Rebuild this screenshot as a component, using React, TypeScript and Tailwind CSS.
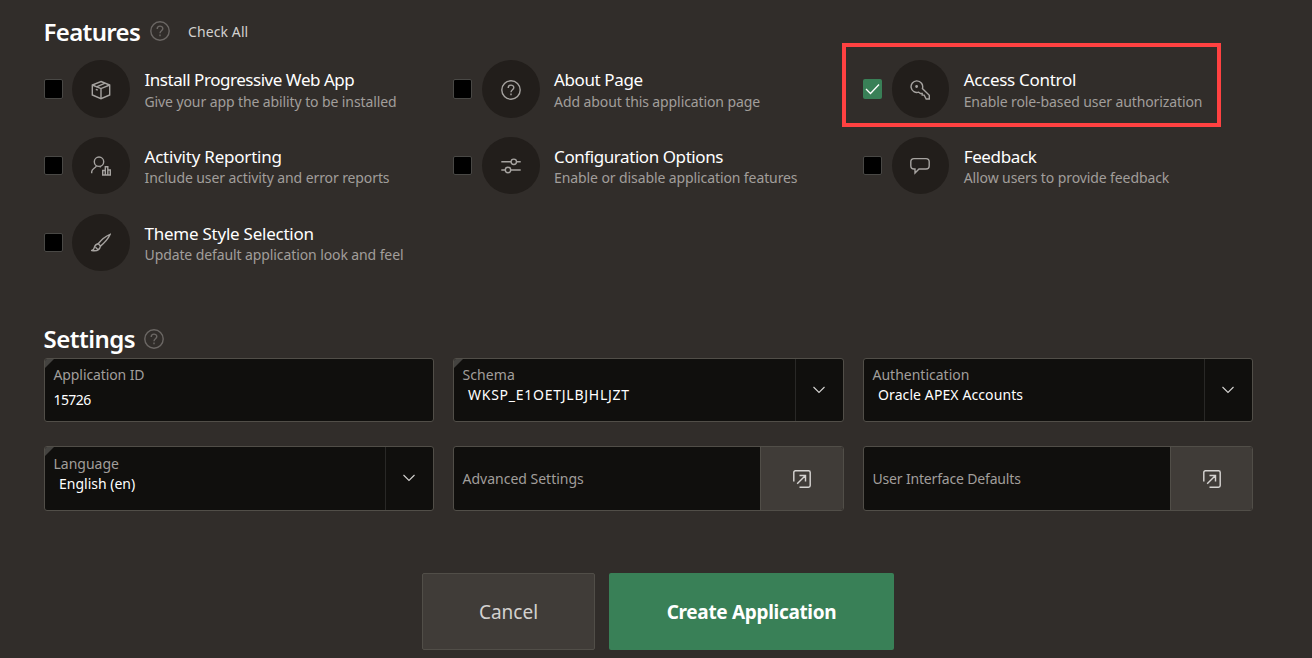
import type { ReactNode } from 'react';

const icons: Record<string, ReactNode> = {
  box: <><path d="M10 1.500 18.700 5v10L10 18.700 1.300 15V5z" /><path d="M1.300 5 10 8.600 18.700 5M10 8.600v10M4.800 9.300l2 .9" /><path d="m5.500 6.800 8.700-3.600" /></>,
  help: <><circle cx="10" cy="10" r="9.200" /><path d="M7.200 8c0-3.900 5.600-3.600 5.600-.4 0 2.300-2.800 2-2.800 4.700M10 13.600v1.600" /></>,
  key: <><path d="M6.700.9a5.800 5.800 0 1 0 2 11.300l1.800 1.300h1.700v1.600h2l2 3.900h3.100v-3.800L12.400 8.600A5.900 5.900 0 0 0 6.700.9z" /><circle cx="6.600" cy="6.500" r=".7" fill="currentColor" /></>,
  report: <><circle cx="8" cy="5.700" r="4.700" /><path d="M.7 17.300v-1.600c0-2.800 3.200-3.300 4.700-5.600M9 10.400l.6 1M11.700 19v-4.500h2.600V19zM14.300 19v-8.300h2.500V19zM16.800 19v-5h2.500v5z" /></>,
  sliders: <><path d="M.3 5.800H10M15.600 5.800h4.100M.3 14H4.200M9.800 14h9.900" /><circle cx="12.800" cy="5.800" r="2.700" /><circle cx="7" cy="14" r="2.700" /></>,
  bubble: <path d="M4 2.600h12q3.200 0 3.200 3.200v4q0 3.200-3.200 3.200H9L5 17v-4H4Q.8 13 .8 9.800v-4Q.8 2.600 4 2.600z" />,
  brush: <><path d="M19.200 1.300C15 3 10.500 6.500 7.200 10.800l2.300 2.300C13 10.200 17 6.200 19.200 1.300z" /><path d="M7.200 10.800c-2.600.4-3.400 2-3.800 3.500Q3 16.600.8 17.500c3 .6 7.500.8 8.700-4.400M4.500 14.200l2.300 2.200" /></>,
};

function Icon({ name }: { name: string }) {
  return <svg viewBox="0 0 20 20" width="20" height="20" fill="none" stroke="currentColor" strokeWidth="1.4">{icons[name]}</svg>;
}

type F = { icon: string; title: string; text: string; checked?: boolean; tracking: string };
const features: F[] = [
  { icon: 'box', title: 'Install Progressive Web App', text: 'Give your app the ability to be installed', tracking: 'tracking-[-0.46px]' },
  { icon: 'help', title: 'About Page', text: 'Add about this application page', tracking: 'tracking-[-0.4px]' },
  { icon: 'key', title: 'Access Control', text: 'Enable role-based user authorization', checked: true, tracking: 'tracking-[-0.3px]' },
  { icon: 'report', title: 'Activity Reporting', text: 'Include user activity and error reports', tracking: 'tracking-[-0.22px]' },
  { icon: 'sliders', title: 'Configuration Options', text: 'Enable or disable application features', tracking: 'tracking-[-0.43px]' },
  { icon: 'bubble', title: 'Feedback', text: 'Allow users to provide feedback', tracking: 'tracking-[-0.37px]' },
  { icon: 'brush', title: 'Theme Style Selection', text: 'Update default application look and feel', tracking: 'tracking-[-0.24px]' },
];

function Feature({ icon, title, text, checked, tracking }: F) {
  return (
    <div className="relative flex h-[58px] items-center">
      {checked && <div className="absolute -left-[21px] -top-[17px] h-[84px] w-[379px] border-4 border-[#ff4141]" />}
      {checked ? (
        <div className="flex h-[19.300px] w-[19px] shrink-0 items-center justify-center rounded-xs bg-[#398057]">
          <svg width="15" height="13" viewBox="0 0 15 13" fill="none" stroke="#fff" strokeWidth="1.3"><path d="m1 7 4.500 4.500L14 2.500" /></svg>
        </div>
      ) : <div className="h-[19.300px] w-[19px] shrink-0 rounded-xs border border-[#494845] bg-black" />}
      <div className="ml-[9.600px] flex size-[57.600px] shrink-0 items-center justify-center rounded-full bg-[#221e1b] pt-[1.200px] text-[#a6a3a0]"><Icon name={icon} /></div>
      <div className="ml-[14.500px] whitespace-nowrap pt-[3.830px]">
        <div className={`text-[17px] leading-[22px] text-white ${tracking}`}><span>{title}</span></div>
        <div className="-mt-[0.830px] text-[14px] leading-[22px] tracking-[-0.1px] text-[#a19e9b]"><span>{text}</span></div>
      </div>
    </div>
  );
}

type S = { label: string; value?: string; kind: 'text' | 'select' | 'link'; required?: boolean; pad?: string; labelTracking?: string; valueTracking?: string; action?: string };
const settings: S[] = [
  { label: 'Application ID', value: '15726', kind: 'text', required: true, pad: 'pt-[6px]', labelTracking: 'tracking-[-0.1px]', valueTracking: 'tracking-[-0.6px]' },
  { label: 'Schema', value: 'WKSP_E1OETJLBJHLJZT', kind: 'select', required: true, pad: 'pt-[6px]', labelTracking: 'tracking-[0.1px]', valueTracking: 'tracking-[0.74px]' },
  { label: 'Authentication', value: 'Oracle APEX Accounts', kind: 'select', pad: 'pt-[6px]', valueTracking: 'tracking-[0.1px]' },
  { label: 'Language', value: 'English (en)', kind: 'select', required: true, pad: 'pt-[7px]' },
  { label: 'Advanced Settings', kind: 'link', action: 'w-[83px]' },
  { label: 'User Interface Defaults', kind: 'link', labelTracking: 'tracking-[-0.17px]', action: 'w-[82px]' },
];

function Setting({ label, value, kind, required, pad = '', labelTracking = '', valueTracking = '', action = '' }: S) {
  return (
    <div className="relative flex overflow-hidden rounded-[3px] border border-[#514e48] bg-[#100f0d]">
      {required && <svg className="absolute left-0 top-0" width="10" height="10"><path d="M0 0h9L0 9z" fill="#444340" /></svg>}
      <div className={`flex-1 pl-[8.500px] ${kind === 'link' ? 'flex items-center pt-[2px]' : pad}`}>
        <div className={`text-[14px] leading-5 text-[#a19e9b] ${labelTracking}`}><span>{label}</span></div>
        {value && <div className={`text-[14px] leading-5 text-white ${kind === 'text' ? 'pt-[5px]' : 'pl-[5.500px]'} ${valueTracking}`}><span>{value}</span></div>}
      </div>
      {kind === 'select' && <div className="flex w-[48px] items-center justify-center border-l border-[#292826] pr-[2px] text-[#d5d3d1]">
        <svg width="12" height="8" viewBox="0 0 12 8" fill="none" stroke="currentColor" strokeWidth="1.1"><path d="m.5 1 5.500 5.500L11.500 1" /></svg>
      </div>}
      {kind === 'link' && <div className={`flex items-center justify-center border-l border-[#514e48] bg-[#403c38] pt-[2px] text-[#d5d3d1] ${action}`}>
        <svg width="18" height="18" viewBox="0 0 18 18" fill="none" stroke="currentColor" strokeWidth="1.45"><path d="M.8 11.500V2.500Q.8.8 2.500.8h13q1.700 0 1.700 1.700v13q0 1.700-1.700 1.700H6.500M4.200 13.800l8.300-8.300M6.500 5.500h6v6" /></svg>
      </div>}
    </div>
  );
}

export default function App() {
  return (
    <main className="flex h-[658px] w-[1312px] flex-col overflow-hidden bg-[#312d2a] pl-[44px] font-['Noto_Sans','Open_Sans',sans-serif]">
      <div className="flex h-[60px] items-center pt-[3px]">
        <h2 className="-ml-[0.500px] w-[97px] text-[24px] font-semibold leading-[30px] tracking-[-0.65px] text-white">Features</h2>
        <span className="mb-[2px] ml-[9px] text-[#6b6764]"><Icon name="help" /></span>
        <span className="ml-[18.500px] text-[14px] tracking-[0.1px] text-[#d3d1cf]">Check All</span>
      </div>
      <section className="-ml-[0.200px] grid w-[1208.800px] grid-cols-3 gap-x-[20px] gap-y-[18.670px]">
        {features.map((f) => <Feature key={f.title} {...f} />)}
      </section>
      <div className="mt-[51.660px] flex h-[32px] items-center">
        <h2 className="-ml-[0.500px] w-[92px] text-[24px] font-semibold leading-[30px] tracking-[-0.5px] text-white">Settings</h2>
        <span className="ml-[8.500px] text-[#6b6764]"><Icon name="help" /></span>
      </div>
      <section className="mt-[3px] grid w-[1209px] grid-cols-[390px_391px_390px] grid-rows-[64px_65px] gap-x-[19px] gap-y-6">
        {settings.map((s) => <Setting key={s.label} {...s} />)}
      </section>
      <div className="mt-[62px] flex gap-[14px] pl-[378px]">
        <button className="h-[77px] w-[173px] rounded-xs border border-[#514e48] bg-[#403c38] pt-[2px] text-[19px] text-[#d3d1cf]"><span>Cancel</span></button>
        <button className="h-[77px] w-[285px] rounded-xs bg-[#398057] pt-[2px] text-[19px] font-bold tracking-[-0.32px] text-white"><span>Create Application</span></button>
      </div>
    </main>
  );
}
